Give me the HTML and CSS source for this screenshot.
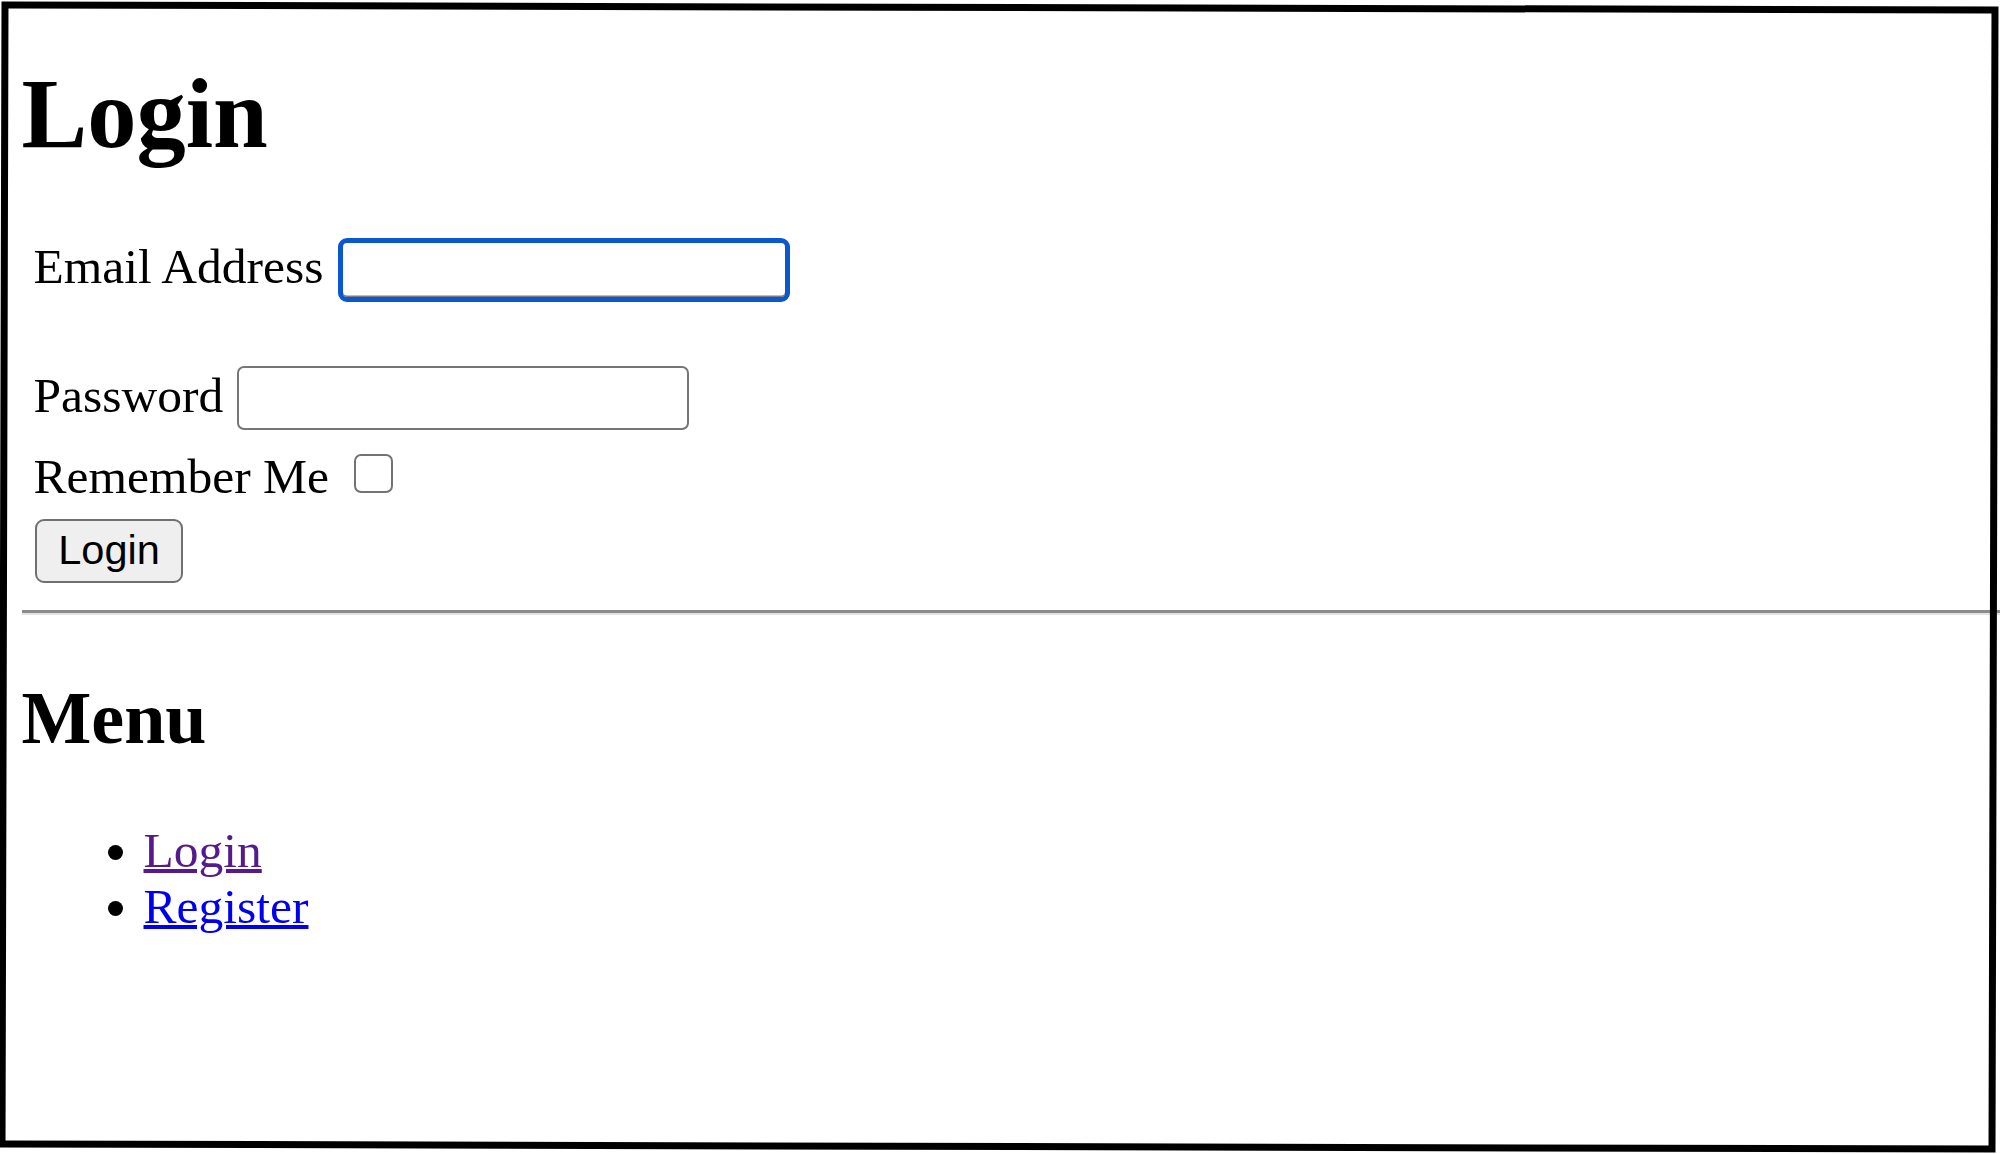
FILE: index.html
```html
<!DOCTYPE html>
<html lang="en">
<head>
  <meta charset="UTF-8" />
  <meta name="viewport" content="width=device-width, initial-scale=1" />
  <title>Login</title>
  <link rel="stylesheet" href="styles.css">
</head>
<body>
  <div class="page">
    <h1>Login</h1>

    <!-- Login form -->
    <form class="login-form">
      <div class="row row-email">
        <label for="email">Email Address</label>
        <input type="email" id="email" class="focused" />
      </div>
      <div class="row row-pass">
        <label for="password">Password</label>
        <input type="password" id="password" />
      </div>
      <div class="row row-remember">
        <label for="remember">Remember Me</label>
        <input type="checkbox" id="remember" />
      </div>
      <button type="button">Login</button>
    </form>

    <hr>

    <h2>Menu</h2>
    <ul class="menu">
      <li><a href="#" class="visited">Login</a></li>
      <li><a href="#">Register</a></li>
    </ul>
  </div>
</body>
</html>
```

FILE: styles.css
```css
html, body {
  margin: 0;
  background: #fff;
}
body {
  font-family: "Liberation Serif", "Times New Roman", serif;
  font-size: 49.5px;
  color: #000;
}
.page {
  position: relative;
  height: 1154px;
  box-sizing: border-box;
  padding: 58px 0 0 21.5px;
  overflow: hidden;
}
/* screenshot frame, drawn over the content */
.page::before {
  content: "";
  position: absolute;
  top: 4px;
  left: 0;
  right: 3px;
  bottom: 4px;
  border: 7px solid #000;
  transform: rotate(0.15deg);
  pointer-events: none;
  z-index: 1;
}
h1 {
  margin: 0;
  font-size: 98.5px;
  line-height: 112px;
  font-weight: bold;
}
.login-form {
  margin-top: 68px;
}
.row {
  display: flex;
  align-items: flex-start;
  gap: 14px;
  padding-left: 12px;
}
.row label {
  line-height: 56px;
  padding-top: 0.5px;
}
.row-pass {
  margin-top: 64px;
}
.row-pass label {
  padding-top: 1.5px;
}
.row-remember {
  margin-top: 18.6px;
  gap: 25px;
}
.row-remember label {
  padding-top: 0;
}
input[type="email"],
input[type="password"] {
  width: 452px;
  height: 64px;
  box-sizing: border-box;
  margin: 0;
  border: 2.5px solid #767676;
  border-radius: 7px;
  background: #fff;
  font-size: 40px;
}
input.focused {
  border: 5px solid #0b57d0;
  border-radius: 9px;
  box-shadow: inset 0 -1.5px 0 #7c7c7c;
  outline: none;
}
input[type="checkbox"] {
  appearance: none;
  -webkit-appearance: none;
  width: 39px;
  height: 39px;
  margin: 5.4px 0 0 0;
  border: 2.5px solid #737373;
  border-radius: 7px;
  background: #fff;
}
button {
  margin: 14.4px 0 0 13.5px;
  width: 148px;
  height: 64px;
  box-sizing: border-box;
  padding: 5px 0 7px;
  font-family: "Liberation Sans", Arial, sans-serif;
  font-size: 41.5px;
  line-height: 46px;
  color: #000;
  background: #efefef;
  border: 2.5px solid #707070;
  border-radius: 9px;
}
hr {
  margin: 27px 0 0 0;
  height: 0;
  border: none;
  border-top: 3px solid #8c8c8c;
  border-bottom: 2px solid #e3e3e3;
}
h2 {
  margin: 61.4px 0 0 0;
  font-size: 74px;
  line-height: 84px;
  font-weight: bold;
}
.menu {
  margin: 62.6px 0 0 0;
  padding-left: 122px;
  line-height: 56.5px;
}
.menu a {
  color: #0000ee;
  text-decoration-thickness: 3.5px;
}
.menu a.visited {
  color: #551a8b;
}
```
